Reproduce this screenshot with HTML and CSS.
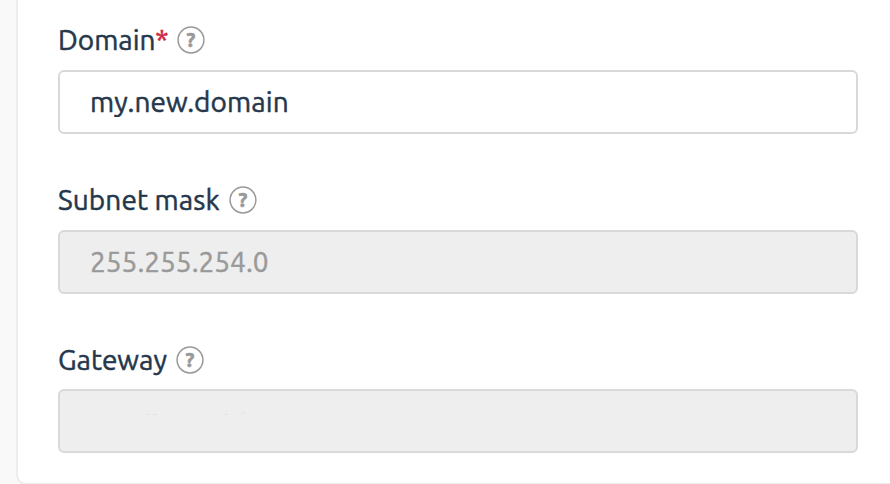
FILE: index.html
```html
<!DOCTYPE html>
<html lang="en">
<head>
    <meta charset="UTF-8">
    <meta name="viewport" content="width=device-width, initial-scale=1.0">
    <title>Network settings</title>
    <link rel="stylesheet" href="styles.css">
</head>
<body>
    <form id="network-card">
        <div class="field">
            <div class="field-label">
                <label for="domain">Domain<span class="required">*</span></label>
                <svg class="help" viewBox="0 0 28 28">
                    <circle cx="14" cy="14" r="12.9"/>
                    <text x="14" y="21">?</text>
                </svg>
            </div>
            <input type="text" id="domain" value="my.new.domain">
        </div>
        <div class="field">
            <div class="field-label">
                <label for="subnet">Subnet mask</label>
                <svg class="help" viewBox="0 0 28 28">
                    <circle cx="14" cy="14" r="12.9"/>
                    <text x="14" y="21">?</text>
                </svg>
            </div>
            <input type="text" id="subnet" value="255.255.254.0" disabled>
        </div>
        <div class="field">
            <div class="field-label">
                <label for="gateway">Gateway</label>
                <svg class="help" viewBox="0 0 28 28">
                    <circle cx="14" cy="14" r="12.9"/>
                    <text x="14" y="21">?</text>
                </svg>
            </div>
            <div class="input-wrap">
                <input type="text" id="gateway" disabled>
                <svg class="marks" viewBox="0 0 100 4">
                    <path d="M0 2.5H3M7 2.5H11M79 2.5H82M95 1.5L99 .5"/>
                </svg>
            </div>
        </div>
    </form>
</body>
</html>
```
FILE: styles.css
```css
* {
    box-sizing: border-box;
}
body {
    margin: 0;
    height: 484px;
    overflow: hidden;
    background-color: #f9f9f9;
    font-family: Ubuntu, "Noto Sans", sans-serif;
    font-size: 28px;
    color: #25374b;
    -webkit-text-stroke: 0.5px;
}
#network-card {
    width: 900px;
    height: 485px;
    margin-left: 16px;
    padding: 18px 0px 0px 40px;
    border: 2px solid #ededed;
    border-top: none;
    border-radius: 0px 0px 0px 10px;
    background-color: white;
}
.field {
    width: 800px;
    height: 160px;
}
.field-label {
    display: flex;
    align-items: center;
    height: 44px;
    margin-bottom: 8px;
}
.field-label label {
    padding-bottom: 2px;
    white-space: nowrap;
}
label[for="subnet"],
#domain {
    letter-spacing: 0.1px;
}
.required {
    color: #d0274a;
}
.help {
    width: 28px;
    height: 28px;
    margin-left: 9px;
}
.help circle {
    fill: none;
    stroke: #999;
    stroke-width: 1.5;
}
.help text {
    fill: #999;
    stroke: #999;
    stroke-width: 0.7px;
    font-size: 20px;
    font-weight: bold;
    text-anchor: middle;
}
input {
    display: block;
    width: 100%;
    height: 64px;
    padding: 0px 30px 2px;
    border: 2px solid #d9d9d9;
    border-radius: 6px;
    background-color: white;
    color: #25374b;
    font: inherit;
}
input:disabled {
    background-color: #eee;
    color: #999;
}
.input-wrap {
    position: relative;
    margin-top: -1px;
}
.marks {
    position: absolute;
    top: 23px;
    left: 88px;
    width: 100px;
    height: 4px;
    fill: none;
    stroke: #e2e2e2;
}
```
